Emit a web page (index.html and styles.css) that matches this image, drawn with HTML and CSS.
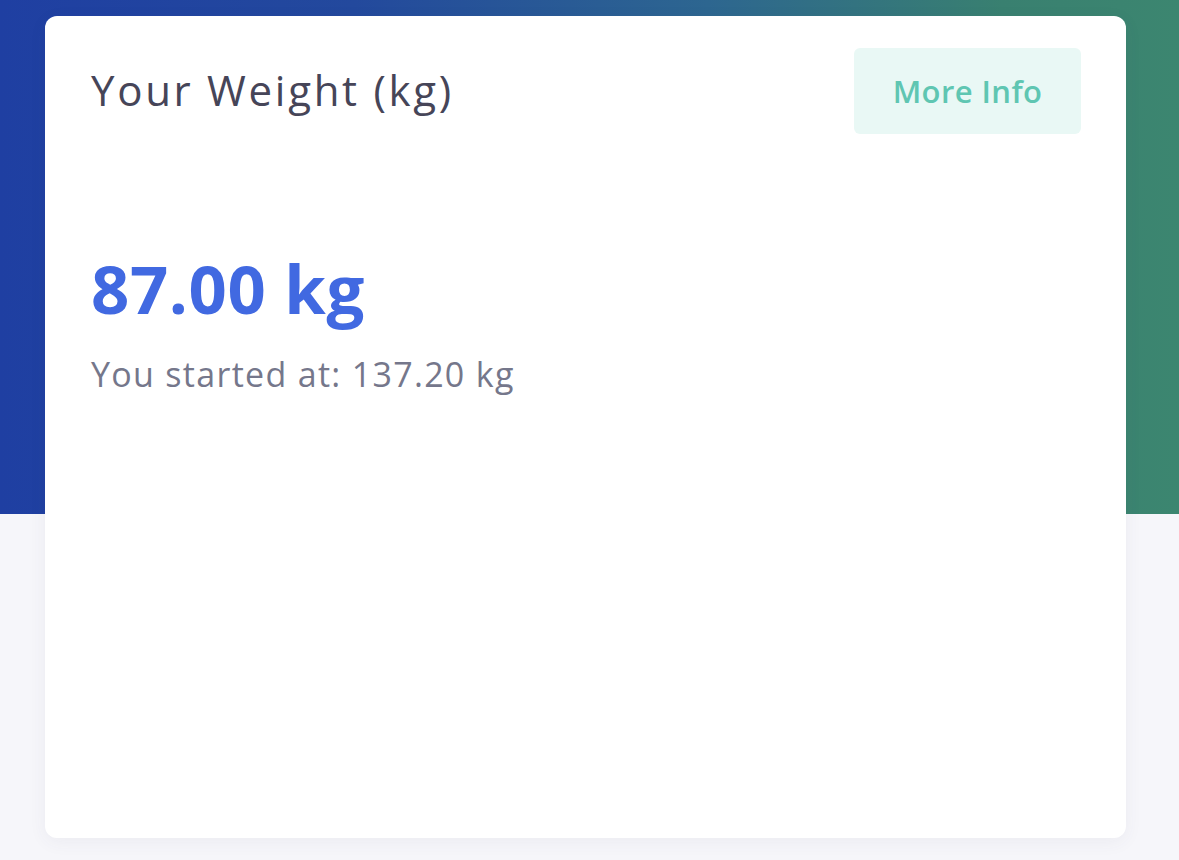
FILE: index.html
```html
<!DOCTYPE html>
<html lang="en">
<head>
<meta charset="utf-8">
<title>Your Weight</title>
<link rel="stylesheet" href="styles.css">
</head>
<body>
<main class="page">
  <section class="card">
    <header class="card-head">
      <h2 class="card-title">Your Weight (kg)</h2>
      <button class="btn-info" type="button">More Info</button>
    </header>
    <div class="card-body">
      <div class="weight-value">87.00 kg</div>
      <div class="weight-start">You started at: 137.20 kg</div>
    </div>
  </section>
</main>
</body>
</html>
```

FILE: styles.css
```css
* { box-sizing: border-box; }
html, body { margin: 0; padding: 0; }
body {
  width: 1179px;
  height: 860px;
  overflow: hidden;
  font-family: "Open Sans", "Lato", sans-serif;
  background:
    linear-gradient(90deg, #1f3fa2 0%, #23499d 30%, #2d6690 60%, #398070 85%, #3c8670 100%) top left / 100% 514px no-repeat,
    #f6f6fa;
}
.page {
  padding: 16px 53px 22px 45px;
}
.card {
  background: #ffffff;
  border-radius: 12px;
  height: 822px;
  padding: 32px 45px 0 46px;
  box-shadow: 0 4px 18px rgba(60, 60, 110, 0.06);
}
.card-head {
  display: flex;
  justify-content: space-between;
  align-items: center;
}
.card-title {
  margin: 0 0 4px;
  font-size: 42px;
  font-weight: 400;
  color: #464558;
  letter-spacing: 2.7px;
}
.btn-info {
  width: 227px;
  height: 86px;
  border: none;
  border-radius: 6px;
  background: #e9f8f5;
  color: #5fc6b2;
  font-family: inherit;
  font-size: 31px;
  font-weight: 600;
  letter-spacing: 0.4px;
  padding: 0;
}
.card-body {
  padding-top: 121px;
}
.weight-value {
  font-size: 67px;
  font-weight: 700;
  color: #4169e1;
  line-height: 1;
  letter-spacing: 0.6px;
}
.weight-start {
  margin-top: 29px;
  font-size: 34px;
  font-weight: 400;
  color: #75778b;
  letter-spacing: 1.3px;
}
```
